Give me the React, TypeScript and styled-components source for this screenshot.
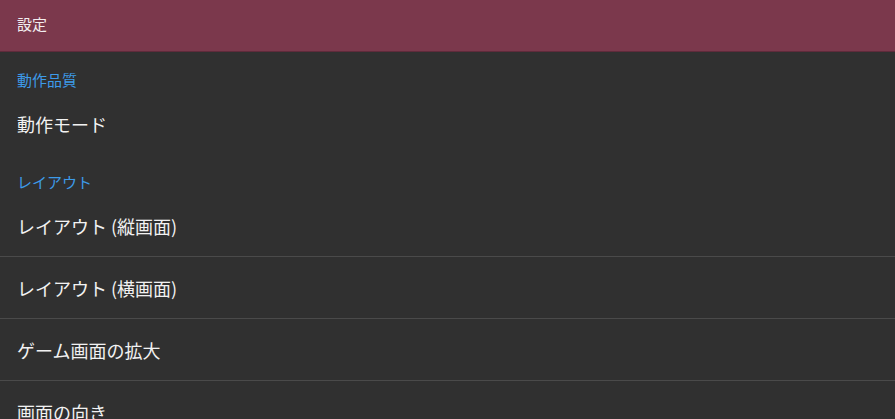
import React from "react";
import styled, { createGlobalStyle } from "styled-components";

const Global = createGlobalStyle`
  html, body { margin: 0; padding: 0; background: #303030; }
  body { font-family: "Noto Sans CJK JP", "Noto Sans", sans-serif; overflow: hidden; }
`;

const Page = styled.div`
  width: 895px;
  height: 419px;
  overflow: hidden;
  background: #303030;
  display: flex;
  flex-direction: column;
`;

const Toolbar = styled.header`
  height: 52px;
  box-sizing: border-box;
  flex: none;
  background: #7b384c;
  border-bottom: 1px solid #5f2b3b;
  display: flex;
  align-items: center;
  padding: 0 0 4px 17px;
  color: #f3eef0;
  font-size: 15px;
`;

const SectionTitle = styled.div`
  height: 41px;
  flex: none;
  box-sizing: border-box;
  padding: 16px 17px 0;
  line-height: 24px;
  font-size: 15px;
  color: #3d9be9;
`;

const Row = styled.div<{ $divider?: boolean }>`
  height: 61px;
  flex: none;
  display: flex;
  align-items: center;
  padding: 0 0 0 17px;
  font-size: 18px;
  color: #f2f2f2;
  border-bottom: ${(p) => (p.$divider ? "1px solid #4a4a4a" : "none")};
`;

const sections = [
  { title: "動作品質", items: ["動作モード"] },
  {
    title: "レイアウト",
    items: ["レイアウト (縦画面)", "レイアウト (横画面)", "ゲーム画面の拡大", "画面の向き"],
  },
];

export default function App() {
  return (
    <Page>
      <Global />
      <Toolbar>設定</Toolbar>
      {sections.map((s) => (
        <React.Fragment key={s.title}>
          <SectionTitle>{s.title}</SectionTitle>
          {s.items.map((it, i) => (
            <Row key={it} $divider={i < s.items.length - 1}>
              {it}
            </Row>
          ))}
        </React.Fragment>
      ))}
    </Page>
  );
}
